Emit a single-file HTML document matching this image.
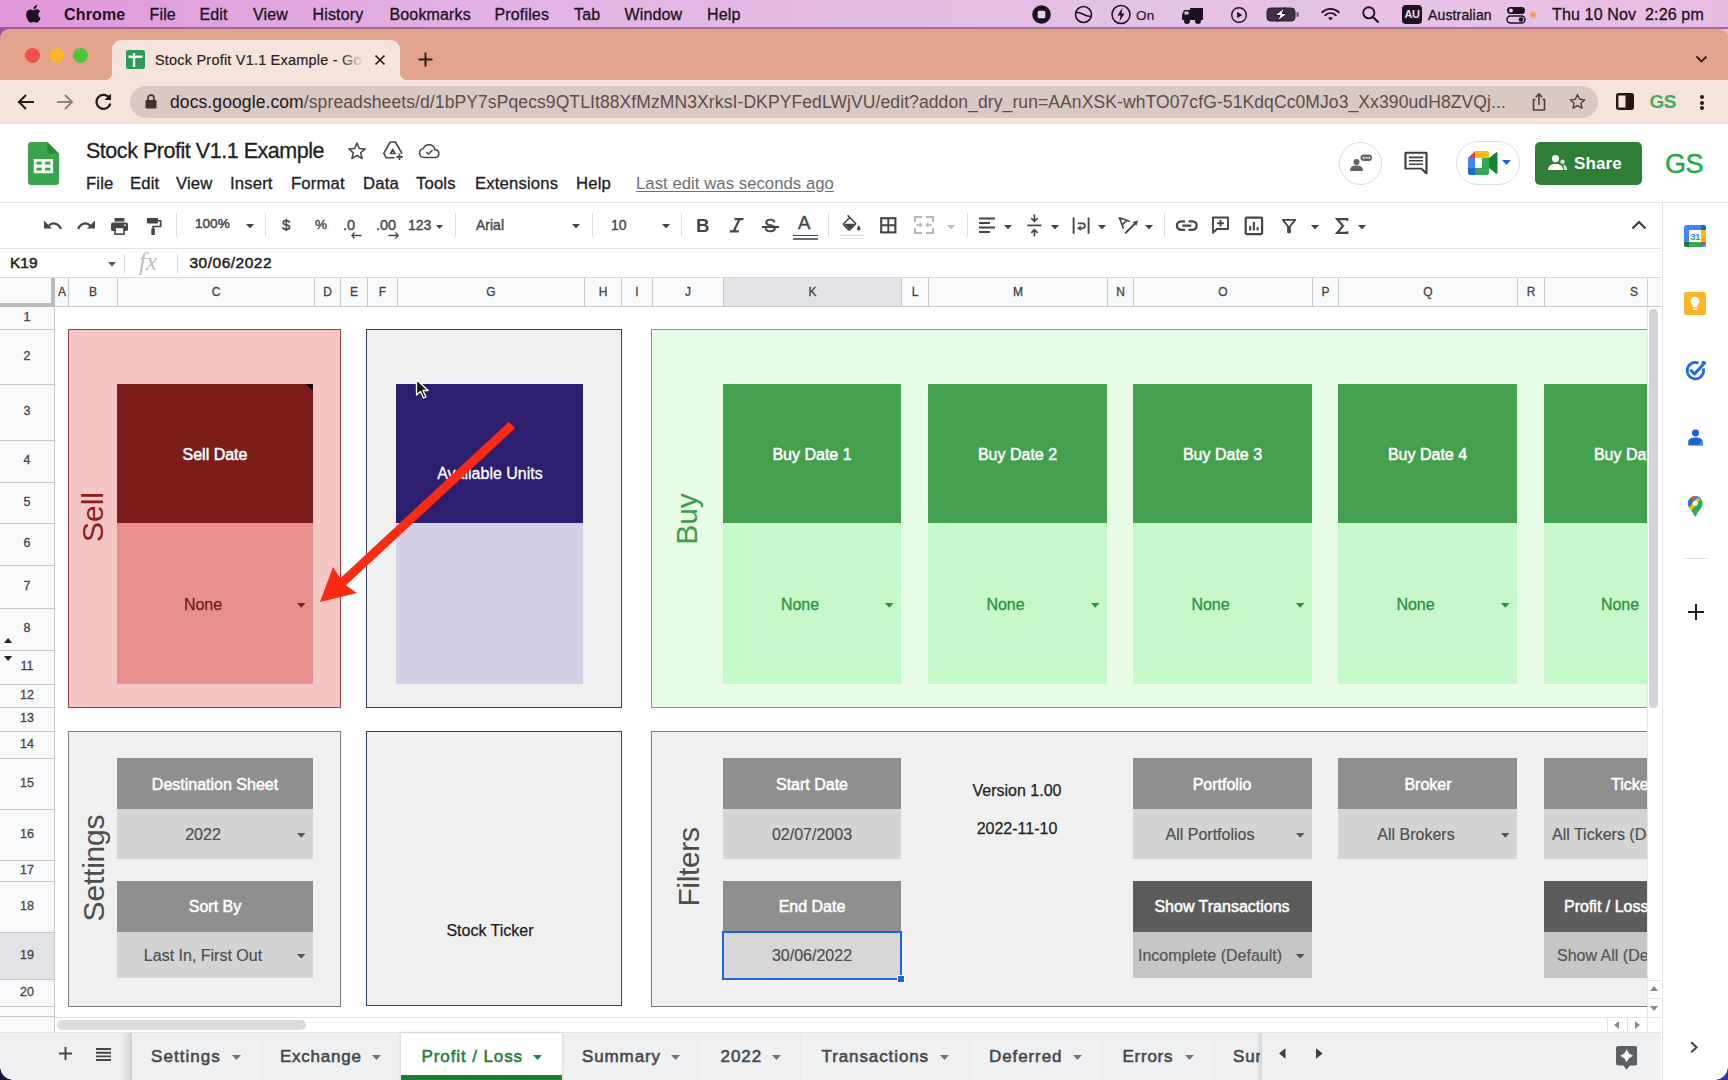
<!DOCTYPE html>
<html lang="en"><head><meta charset="utf-8"><title>Stock Profit V1.1 Example - Google Sheets</title>
<style>
html,body{margin:0;padding:0}
body{width:1728px;height:1080px;overflow:hidden;background:#fff;position:relative;font-family:"Liberation Sans",sans-serif}
#root{position:absolute;left:0;top:0;width:1728px;height:1080px;overflow:hidden;background:#fff}

#macbar{position:absolute;left:0;top:0;width:1728px;height:29px;background:linear-gradient(90deg,#e096da 0%,#e1a0dd 9%,#e2afe2 24%,#e4bae5 45%,#e4c1e6 65%,#e8c2e7 85%,#e9bbe3 100%)}
.mm{position:absolute;top:4.5px;font:16px/20px "Liberation Sans",sans-serif;color:#1d1220;white-space:nowrap;-webkit-text-stroke:.3px #1d1220;letter-spacing:.15px}
.mb{font-weight:bold;-webkit-text-stroke:0}
#tabstrip{position:absolute;left:0;top:29px;width:1728px;height:51px;background:#e3a28d;border-radius:9px 9px 0 0}
#acttab{position:absolute;left:112px;top:40px;width:288px;height:41px;background:#f6e3dc;border-radius:9px 9px 0 0}
#tabtitle{position:absolute;left:155px;top:50px;width:208px;overflow:hidden;white-space:nowrap;letter-spacing:.2px;-webkit-text-stroke:.2px #2a1f1d;font:14.5px/20px "Liberation Sans",sans-serif;color:#2a1f1d}
#ctool{position:absolute;left:0;top:80px;width:1728px;height:43px;background:#f6e3dc;border-bottom:1px solid #eedbd4}
#omni{position:absolute;left:130px;top:86px;width:1468px;height:32px;border-radius:16px;background:#d9c8c3}
#url{position:absolute;left:170px;top:91px;font:17.5px/22px "Liberation Sans",sans-serif;color:#5a4e4b;white-space:nowrap;letter-spacing:.1px}

#shdr{position:absolute;left:0;top:125px;width:1728px;height:77px;background:#fff;border-bottom:1px solid #e3e3e3}
#doctitle{position:absolute;left:86px;top:137px;font:21.5px/28px "Liberation Sans",sans-serif;color:#1f1f1f;white-space:nowrap;letter-spacing:-.47px;-webkit-text-stroke:.3px #1f1f1f}
.sm{position:absolute;top:172.5px;letter-spacing:.15px;font:16.7px/22px "Liberation Sans",sans-serif;color:#202124;white-space:nowrap;-webkit-text-stroke:.3px #202124}
#sharebtn{position:absolute;left:1535px;top:142px;width:107px;height:43px;border-radius:5px;background:#2f7d37}
#stool{position:absolute;left:0;top:203px;width:1661px;height:45px;background:#fff;border-bottom:1px solid #e1e1e1}
.tsep{position:absolute;top:213px;width:1px;height:24px;background:#dcdcdc}
.tt{position:absolute;top:214px;font:14px/22px "Liberation Sans",sans-serif;color:#444746;white-space:nowrap;-webkit-text-stroke:.4px #444746}
#fbar{position:absolute;left:0;top:249px;width:1661px;height:28px;background:#fff;border-bottom:1px solid #d9d9d9}

.ch{position:absolute;top:278px;height:29px;box-sizing:border-box;border-right:1px solid #c4c7c5;border-bottom:1px solid #c4c7c5;text-align:center;font:12px/29px "Liberation Sans",sans-serif;color:#444;-webkit-text-stroke:.3px #444}
.rh{position:absolute;left:0;width:55px;box-sizing:border-box;border-right:1px solid #c4c7c5;border-bottom:1px solid #c4c7c5;text-align:center;font:12.5px "Liberation Sans",sans-serif;color:#444;-webkit-text-stroke:.3px #444}

#tabbar{position:absolute;left:0;top:1032px;width:1661px;height:48px;background:#eff0f1;border-top:1px solid #e4e4e4;box-sizing:border-box}
.st{position:absolute;top:1046px;font:17px/22px "Liberation Sans",sans-serif;white-space:nowrap;letter-spacing:.35px}
#side{position:absolute;left:1662px;top:203px;width:66px;height:877px;background:#fff;border-left:1px solid #e0e0e0;box-sizing:border-box}

</style></head>
<body><div id="root">
<div id="macbar"></div>
<div style="position:absolute;left:0;top:27.3px;width:1728px;height:1.7px;background:rgba(95,25,75,.5)"></div>
<svg style="position:absolute;left:22.5px;top:2.5px" width="18.7" height="22" viewBox="0 0 17 20"><path fill="#1d1220" d="M13.9 10.6c0-2.1 1.7-3.1 1.8-3.2-1-1.4-2.5-1.6-3-1.7-1.3-.1-2.5.8-3.1.8-.7 0-1.6-.7-2.7-.7-1.4 0-2.6.8-3.3 2-1.4 2.5-.4 6.1 1 8.1.7 1 1.5 2.1 2.5 2 1-.04 1.4-.65 2.6-.65s1.6.65 2.7.63c1.1-.02 1.8-1 2.5-2 .8-1.1 1.1-2.2 1.1-2.3-.02-.01-2.1-.8-2.1-3.2zM11.9 4.3c.6-.7 1-1.7.9-2.6-.8.03-1.8.55-2.4 1.25-.5.6-1 1.6-.85 2.5.9.07 1.8-.45 2.35-1.15z"/></svg>
<div class="mm mb" style="left:64px">Chrome</div>
<div class="mm" style="left:149.5px">File</div>
<div class="mm" style="left:199.5px">Edit</div>
<div class="mm" style="left:253px">View</div>
<div class="mm" style="left:312.5px">History</div>
<div class="mm" style="left:389.5px">Bookmarks</div>
<div class="mm" style="left:494.5px">Profiles</div>
<div class="mm" style="left:574px">Tab</div>
<div class="mm" style="left:624.5px">Window</div>
<div class="mm" style="left:707px">Help</div>
<svg style="position:absolute;left:1031px;top:4px" width="21" height="21" viewBox="0 0 21 21"><circle cx="10.5" cy="10.5" r="9.3" fill="#1d1220"/><rect x="6.7" y="6.7" width="7.6" height="7.6" rx="1.5" fill="#e9d3ea"/></svg>
<svg style="position:absolute;left:1073px;top:4px" width="21" height="21" viewBox="0 0 21 21"><circle cx="10.5" cy="10.5" r="8" fill="none" stroke="#1d1220" stroke-width="1.6"/><path d="M3 9 C8 6,12 14,18 12" fill="none" stroke="#1d1220" stroke-width="1.6"/></svg>
<svg style="position:absolute;left:1110px;top:3px" width="22" height="23" viewBox="0 0 22 23"><circle cx="11" cy="11.5" r="9" fill="none" stroke="#1d1220" stroke-width="1.5"/><path d="M12.5 4.5 L7.5 12.5 H10.5 L9.5 18.5 L14.5 10.5 H11.5 Z" fill="#1d1220"/></svg>
<div class="mm" style="left:1136px;font-size:13.5px;top:6px;-webkit-text-stroke:.15px #1d1220">On</div>
<svg style="position:absolute;left:1181px;top:6px" width="24" height="19" viewBox="0 0 24 19"><path d="M1 9 L3 4 H9 V2 H22 V14 H1 Z" fill="#1d1220"/><circle cx="6" cy="15" r="3" fill="#1d1220"/><circle cx="17" cy="15" r="3" fill="#1d1220"/><rect x="3.5" y="5.5" width="4" height="3" fill="#e3bfe4"/></svg>
<svg style="position:absolute;left:1230px;top:6px" width="18" height="18" viewBox="0 0 18 18"><circle cx="9" cy="9" r="7.3" fill="none" stroke="#1d1220" stroke-width="1.4"/><path d="M7.2 5.8 L12.2 9 L7.2 12.2 Z" fill="#1d1220"/></svg>
<svg style="position:absolute;left:1266px;top:6px" width="34" height="17" viewBox="0 0 34 17"><rect x="1" y="2" width="28" height="13" rx="3.5" fill="#3f3044" stroke="#2c2030" stroke-width="1"/><rect x="30.5" y="6" width="2.2" height="5" rx="1" fill="#6b5a6e"/><path d="M19 1.5 L8.5 9.5 H14 L11 15.5 L21.5 7.5 H16 Z" fill="#fff" stroke="#1d1220" stroke-width="1"/></svg>
<svg style="position:absolute;left:1321px;top:7px" width="19" height="14.5" viewBox="0 0 24 18"><path d="M1.5 6.5 C7.5 .8,16.5 .8,22.5 6.5" fill="none" stroke="#1d1220" stroke-width="2.3" stroke-linecap="round"/><path d="M5.3 10.2 C9.3 6.6,14.7 6.6,18.7 10.2" fill="none" stroke="#1d1220" stroke-width="2.3" stroke-linecap="round"/><path d="M9 13.7 C10.8 12.2,13.2 12.2,15 13.7 L12 17 Z" fill="#1d1220"/></svg>
<svg style="position:absolute;left:1361px;top:5px" width="19" height="19" viewBox="0 0 19 19"><circle cx="7.8" cy="7.8" r="5.6" fill="none" stroke="#1d1220" stroke-width="1.9"/><path d="M12 12 L17 17" stroke="#1d1220" stroke-width="2.1" stroke-linecap="round"/></svg>
<div style="position:absolute;left:1402px;top:5px;width:20px;height:19px;background:#1d1220;border-radius:4px;color:#f0d8f0;font:bold 11px/19px 'Liberation Sans',sans-serif;text-align:center;letter-spacing:-.5px">AU</div>
<div class="mm" style="left:1428px;font-size:14px;top:5px">Australian</div>
<svg style="position:absolute;left:1506px;top:6px" width="22" height="18" viewBox="0 0 22 18"><rect x="1" y="1" width="18" height="7" rx="3.5" fill="#1d1220"/><circle cx="5" cy="4.5" r="2" fill="#e6c9e8"/><rect x="1" y="10" width="18" height="7" rx="3.5" fill="none" stroke="#1d1220" stroke-width="1.5"/><circle cx="15" cy="13.5" r="2.3" fill="#1d1220"/></svg>
<div style="position:absolute;left:1530px;top:12px;width:6px;height:6px;border-radius:3px;background:#f0a050"></div>
<div class="mm" style="left:1552px">Thu 10 Nov</div>
<div class="mm" style="left:1645px">2:26 pm</div>
<div style="position:absolute;left:0;top:29px;width:1728px;height:12px;background:linear-gradient(90deg,#a04fa0,#c9a3d0 8%,#d9bfe0)"></div>
<div id="tabstrip"></div>
<div style="position:absolute;left:24.799999999999997px;top:47.8px;width:15px;height:15px;border-radius:7.5px;background:#f0514e"></div>
<div style="position:absolute;left:48.7px;top:47.8px;width:15px;height:15px;border-radius:7.5px;background:#f8b92f"></div>
<div style="position:absolute;left:72.7px;top:47.8px;width:15px;height:15px;border-radius:7.5px;background:#4fc53b"></div>
<div id="acttab"></div>
<div style="position:absolute;left:104px;top:72px;width:8px;height:8px;background:radial-gradient(circle at 0 0,transparent 8px,#f6e3dc 8.5px)"></div>
<div style="position:absolute;left:400px;top:72px;width:8px;height:8px;background:radial-gradient(circle at 100% 0,transparent 8px,#f6e3dc 8.5px)"></div>
<svg style="position:absolute;left:126px;top:50px" width="19" height="19" viewBox="0 0 19 19"><rect width="19" height="19" rx="2" fill="#2c9c56"/><rect x="6.9" y="3" width="2.3" height="14" fill="#fff"/><rect x="2.5" y="5.6" width="14" height="2.3" fill="#fff"/></svg>
<div id="tabtitle">Stock Profit V1.1 Example - Go</div>
<div style="position:absolute;left:340px;top:44px;width:26px;height:30px;background:linear-gradient(90deg,rgba(246,227,220,0),#f6e3dc 90%)"></div>
<svg style="position:absolute;left:374px;top:54px" width="12" height="12" viewBox="0 0 12 12"><path d="M1.5 1.5 L10.5 10.5 M10.5 1.5 L1.5 10.5" stroke="#2a1f1d" stroke-width="1.7"/></svg>
<svg style="position:absolute;left:418px;top:52px" width="15" height="15" viewBox="0 0 15 15"><path d="M7.5 .5 V14.5 M.5 7.5 H14.5" stroke="#2a1f1d" stroke-width="2"/></svg>
<svg style="position:absolute;left:1695px;top:55px" width="13" height="9" viewBox="0 0 13 9"><path d="M1.5 1.5 L6.5 6.5 L11.5 1.5" fill="none" stroke="#2a1f1d" stroke-width="1.9"/></svg>
<div id="ctool"></div>
<svg style="position:absolute;left:17px;top:93px" width="18" height="18" viewBox="0 0 18 18"><path d="M17 9 H2.5 M9 2 L2 9 L9 16" fill="none" stroke="#231a18" stroke-width="2.1"/></svg>
<svg style="position:absolute;left:56px;top:93px" width="18" height="18" viewBox="0 0 18 18"><path d="M1 9 H15.5 M9 2 L16 9 L9 16" fill="none" stroke="#8f817e" stroke-width="2"/></svg>
<svg style="position:absolute;left:94px;top:92px" width="19" height="19" viewBox="0 0 19 19"><path d="M15.5 6.2 A7 7 0 1 0 16.3 11.5" fill="none" stroke="#231a18" stroke-width="2.2"/><path d="M17 1.5 V8 H10.5 Z" fill="#231a18"/></svg>
<div id="omni"></div>
<svg style="position:absolute;left:145px;top:94px" width="12" height="15" viewBox="0 0 12 15"><rect x=".5" y="6" width="11" height="8.5" rx="1.2" fill="#3e3432"/><path d="M3 6.5 V4.2 a3 3 0 0 1 6 0 V6.5" fill="none" stroke="#3e3432" stroke-width="1.7"/></svg>
<div id="url"><span style="color:#1f1816">docs.google.com</span>/spreadsheets/d/1bPY7sPqecs9QTLIt88XfMzMN3XrksI-DKPYFedLWjVU/edit?addon_dry_run=AAnXSK-whTO07cfG-51KdqCc0MJo3_Xx390udH8ZVQj...</div>
<svg style="position:absolute;left:1531px;top:92px" width="16" height="20" viewBox="0 0 16 20"><path d="M4.5 7.5 H2.5 V18 H13.5 V7.5 H11.5" fill="none" stroke="#4a403d" stroke-width="1.6"/><path d="M8 13 V2.5 M4.8 5.2 L8 2 L11.2 5.2" fill="none" stroke="#4a403d" stroke-width="1.6"/></svg>
<svg style="position:absolute;left:1568.5px;top:93px" width="17" height="16.2" viewBox="0 0 20 19"><path d="M10 1.8 L12.5 7.3 L18.5 8 L14 12 L15.3 17.8 L10 14.8 L4.7 17.8 L6 12 L1.5 8 L7.5 7.3 Z" fill="none" stroke="#4a403d" stroke-width="1.6" stroke-linejoin="round"/></svg>
<svg style="position:absolute;left:1616px;top:93px" width="18" height="17" viewBox="0 0 18 17"><rect x="1.2" y="1.2" width="15.6" height="14.6" rx="1.5" fill="none" stroke="#1f1816" stroke-width="2.4"/><rect x="9.5" y="1.2" width="7.3" height="14.6" fill="#1f1816"/></svg>
<div style="position:absolute;left:1649.5px;top:89.5px;font:bold 19px/24px 'Liberation Sans',sans-serif;color:#43ad5e;letter-spacing:-.6px">GS</div>
<div style="position:absolute;left:1700px;top:95px;width:4px;height:4px;border-radius:2px;background:#231a18"></div>
<div style="position:absolute;left:1700px;top:100.7px;width:4px;height:4px;border-radius:2px;background:#231a18"></div>
<div style="position:absolute;left:1700px;top:106.4px;width:4px;height:4px;border-radius:2px;background:#231a18"></div>
<div id="shdr"></div>
<svg style="position:absolute;left:27.7px;top:141.5px" width="31" height="43" viewBox="0 0 32 44" preserveAspectRatio="none">
<path d="M3 0 H20 L32 12 V41 a3 3 0 0 1 -3 3 H3 a3 3 0 0 1 -3 -3 V3 a3 3 0 0 1 3 -3 Z" fill="#3aa34e"/>
<path d="M20 0 L32 12 H23 a3 3 0 0 1 -3 -3 Z" fill="#2a8a35"/>
<path d="M5.9 17.4 H25.9 V31.9 H5.9 Z M8.8 20.2 V23.1 H14.1 V20.2 Z M17.7 20.2 V23.1 H23.1 V20.2 Z M8.8 26.3 V29.2 H14.1 V26.3 Z M17.7 26.3 V29.2 H23.1 V26.3 Z" fill="#f1f8f2" fill-rule="evenodd"/>
</svg>
<div id="doctitle">Stock Profit V1.1 Example</div>
<svg style="position:absolute;left:347px;top:141px" width="20" height="19" viewBox="0 0 20 19"><path d="M10 2 L12.3 7.4 L18.2 7.9 L13.7 11.8 L15.1 17.5 L10 14.4 L4.9 17.5 L6.3 11.8 L1.8 7.9 L7.7 7.4 Z" fill="none" stroke="#444746" stroke-width="1.5" stroke-linejoin="round"/></svg>
<svg style="position:absolute;left:382px;top:140px" width="23" height="21" viewBox="0 0 23 21"><path d="M8.2 2 H13.3 L20 13.5 M8.2 2 L1.8 13.3 L4.3 17.8 H12.5 M8.5 13.5 L10.8 9.5 L13 13.5 Z" fill="none" stroke="#444746" stroke-width="1.6" stroke-linejoin="round"/><path d="M17.5 13.5 V20 M14.3 16.8 H20.8" stroke="#444746" stroke-width="1.7"/></svg>
<svg style="position:absolute;left:418px;top:143px" width="23" height="16" viewBox="0 0 23 16"><path d="M6 14.5 a4.5 4.5 0 0 1 -.6 -8.95 a6 6 0 0 1 11.5 1.2 a3.9 3.9 0 0 1 .6 7.75 Z" fill="none" stroke="#444746" stroke-width="1.6"/><path d="M8.2 9 L10.5 11.2 L14.5 7" fill="none" stroke="#444746" stroke-width="1.5"/></svg>
<div class="sm" style="left:86px">File</div>
<div class="sm" style="left:130px">Edit</div>
<div class="sm" style="left:176px">View</div>
<div class="sm" style="left:230px">Insert</div>
<div class="sm" style="left:291px">Format</div>
<div class="sm" style="left:363px">Data</div>
<div class="sm" style="left:416px">Tools</div>
<div class="sm" style="left:475px">Extensions</div>
<div class="sm" style="left:576px">Help</div>
<div class="sm" style="left:636px;color:#6b6f73;text-decoration:underline;text-underline-offset:2px;-webkit-text-stroke:0;letter-spacing:.05px">Last edit was seconds ago</div>
<div style="position:absolute;left:1339px;top:141.5px;width:43px;height:43px;border-radius:21.5px;border:1.8px solid #d6d8db;box-sizing:border-box"></div>
<svg style="position:absolute;left:1349px;top:153px" width="24" height="20" viewBox="0 0 24 20"><circle cx="7.5" cy="9" r="3" fill="#5f6368"/><path d="M1 18 c0 -4.5 3 -5.5 6.5 -5.5 s6.5 1 6.5 5.5 Z" fill="#5f6368"/><rect x="11.5" y="1.5" width="11.5" height="6.5" rx="3.2" fill="#5f6368"/><circle cx="14.7" cy="4.75" r="1" fill="#fff"/><circle cx="17.5" cy="4.75" r="1" fill="#fff"/><circle cx="20.3" cy="4.75" r="1" fill="#fff"/></svg>
<svg style="position:absolute;left:1403px;top:150.5px" width="26" height="23.5" viewBox="0 0 26 26" preserveAspectRatio="none"><path d="M2.5 2 H23.5 V25 L18.5 19.5 H2.5 Z" fill="none" stroke="#3c4043" stroke-width="2.2" stroke-linejoin="round"/><path d="M6 7 H20 M6 10.8 H20 M6 14.6 H20" stroke="#3c4043" stroke-width="1.8"/></svg>
<div style="position:absolute;left:1456px;top:141px;width:64px;height:44px;border-radius:22px;border:1.5px solid #dadce0;box-sizing:border-box"></div>
<svg style="position:absolute;left:1468px;top:151px" width="30" height="24" viewBox="0 0 30 24">
<path d="M0 7 L7 0 V7 Z" fill="#ea4335"/><path d="M7 0 H19 a2 2 0 0 1 2 2 V7 H7 Z" fill="#fbbc04"/>
<path d="M0 7 H7 V17 H0 Z" fill="#4285f4"/><path d="M0 17 H7 V24 H2 a2 2 0 0 1 -2 -2 Z" fill="#1967d2"/>
<path d="M7 17 H21 V22 a2 2 0 0 1 -2 2 H7 Z" fill="#34a853"/>
<path d="M21 7 L28 1.5 a1 1 0 0 1 1.5 .8 V21.7 a1 1 0 0 1 -1.5 .8 L21 17 Z" fill="#188038"/><path d="M14 7 H21 V17 H14 Z" fill="#34a853"/><path d="M7 7 H14 V17 H7 Z" fill="#fff"/>
</svg>
<svg style="position:absolute;left:1501.5px;top:160.0px" width="9" height="5" viewBox="0 0 8 4.5"><path d="M0 0 H8 L4 4.5 Z" fill="#1a67d2"/></svg>
<div id="sharebtn"></div>
<svg style="position:absolute;left:1548px;top:154px" width="19" height="17" viewBox="0 0 19 17"><circle cx="7.5" cy="4.6" r="3.6" fill="#fff"/><path d="M0 16 c0 -4.5 3.5 -6 7.5 -6 s7.5 1.5 7.5 6 Z" fill="#fff"/><path d="M14.5 5.5 a2.3 2.3 0 1 0 .01 0 M15.5 10.5 c2 .5 3.5 2 3.5 5.5 h-3" fill="#cfe7d3"/></svg>
<div style="position:absolute;left:1574px;top:153px;font:bold 17px/22px 'Liberation Sans',sans-serif;color:#fff;letter-spacing:.1px">Share</div>
<div style="position:absolute;left:1665px;top:145px;font:27px/38px 'Liberation Sans',sans-serif;color:#1ea845;letter-spacing:-.6px;-webkit-text-stroke:.35px #1ea845">GS</div>
<div id="stool"></div>
<svg style="position:absolute;left:43px;top:217px" width="20" height="14" viewBox="0 0 20 14"><path d="M5.5 9 C9 5,15 5.5,18 12" fill="none" stroke="#444746" stroke-width="2.2"/><path d="M1 3.5 V11.5 H9 Z" fill="#444746"/></svg>
<svg style="position:absolute;left:76px;top:217px" width="20" height="14" viewBox="0 0 20 14"><path d="M14.5 9 C11 5,5 5.5,2 12" fill="none" stroke="#444746" stroke-width="2.2"/><path d="M19 3.5 V11.5 H11 Z" fill="#444746"/></svg>
<svg style="position:absolute;left:110px;top:217.5px" width="19" height="17" viewBox="0 0 21 19"><rect x="5" y="0" width="11" height="4" fill="#444746"/><rect x="1" y="5" width="19" height="9.5" rx="2" fill="#444746"/><rect x="5.5" y="10.5" width="10" height="7.5" fill="#fff" stroke="#444746" stroke-width="1.8"/><circle cx="16.7" cy="8" r="1" fill="#fff"/></svg>
<svg style="position:absolute;left:146px;top:217.5px" width="16" height="17" viewBox="0 0 18 19"><rect x="1" y="0" width="12.5" height="6" rx="1" fill="#444746"/><path d="M13.5 3 H16.5 V9.5 H8 V12" fill="none" stroke="#444746" stroke-width="1.9"/><rect x="6" y="11.5" width="4" height="7.5" rx=".8" fill="#444746"/></svg>
<div class="tsep" style="left:176px"></div>
<div class="tsep" style="left:265px"></div>
<div class="tsep" style="left:455px"></div>
<div class="tsep" style="left:592px"></div>
<div class="tsep" style="left:681px"></div>
<div class="tsep" style="left:828px"></div>
<div class="tsep" style="left:967px"></div>
<div class="tsep" style="left:1164px"></div>
<div class="tt" style="left:195px;top:213px;font-size:13.6px;-webkit-text-stroke:.45px #444746">100%</div>
<svg style="position:absolute;left:246.0px;top:223.75px" width="8" height="4.5" viewBox="0 0 8 4.5"><path d="M0 0 H8 L4 4.5 Z" fill="#444"/></svg>
<div class="tt" style="left:282px;font-size:15px">$</div>
<div class="tt" style="left:315px;font-size:13.5px">%</div>
<div class="tt" style="left:343px;font-size:14.5px">.0</div>
<svg style="position:absolute;left:351px;top:232px" width="11" height="7" viewBox="0 0 11 7"><path d="M3.5 .5 L.8 3.5 L3.5 6.5 M1 3.5 H10.5" fill="none" stroke="#444746" stroke-width="1.3"/></svg>
<div class="tt" style="left:376px;font-size:14.5px">.00</div>
<svg style="position:absolute;left:388px;top:232px" width="11" height="7" viewBox="0 0 11 7"><path d="M7.5 .5 L10.2 3.5 L7.5 6.5 M10 3.5 H.5" fill="none" stroke="#444746" stroke-width="1.3"/></svg>
<div class="tt" style="left:408px">123</div>
<svg style="position:absolute;left:436.0px;top:224.5px" width="7" height="4" viewBox="0 0 8 4.5"><path d="M0 0 H8 L4 4.5 Z" fill="#444"/></svg>
<div class="tt" style="left:476px">Arial</div>
<svg style="position:absolute;left:571.5px;top:223.75px" width="8" height="4.5" viewBox="0 0 8 4.5"><path d="M0 0 H8 L4 4.5 Z" fill="#444"/></svg>
<div class="tt" style="left:611px">10</div>
<svg style="position:absolute;left:661.5px;top:223.75px" width="8" height="4.5" viewBox="0 0 8 4.5"><path d="M0 0 H8 L4 4.5 Z" fill="#444"/></svg>
<div style="position:absolute;left:696px;top:213.5px;font:bold 18.7px/24px 'Liberation Sans',sans-serif;color:#444746">B</div>
<svg style="position:absolute;left:729px;top:218px" width="16" height="15" viewBox="0 0 16 15"><path d="M5.5 1.2 H14.5 M.8 13.3 H9.8 M10.6 1.2 L4.6 13.3" fill="none" stroke="#444746" stroke-width="2.2"/></svg>
<div style="position:absolute;left:764px;top:213.5px;font:18.5px/24px 'Liberation Sans',sans-serif;color:#444746;-webkit-text-stroke:.5px #444746">S</div>
<div style="position:absolute;left:762px;top:225.9px;width:17px;height:1.8px;background:#444746"></div>
<div style="position:absolute;left:798px;top:211px;font:18.6px/24px 'Liberation Sans',sans-serif;color:#444746;-webkit-text-stroke:.45px #444746">A</div>
<div style="position:absolute;left:793px;top:235.2px;width:25px;height:1.3px;background:#444746"></div>
<div style="position:absolute;left:793px;top:238.3px;width:25px;height:1.3px;background:#6b6e70"></div>
<svg style="position:absolute;left:840px;top:214px" width="25" height="26" viewBox="0 0 25 26"><path d="M7.6 1.3 L9.9 3.6 M9.8 3.5 L3.8 9.5 a1 1 0 0 0 0 1.4 L8.5 15.6 a1 1 0 0 0 1.4 0 L15.5 10 a.6.6 0 0 0 0 -.8 Z" fill="none" stroke="#444746" stroke-width="1.6" stroke-linejoin="round"/><path d="M4.3 9.8 H15 L9.2 15.5 Z" fill="#444746"/><path d="M18.8 11.5 c0 0 -1.8 2.2 -1.8 3.3 a1.8 1.8 0 0 0 3.6 0 c0 -1.1 -1.8 -3.3 -1.8 -3.3 Z" fill="#444746"/><rect x=".3" y="20.7" width="23.6" height="1.2" fill="#d6d6d6"/><rect x=".3" y="23.9" width="23.6" height="1.1" fill="#e2e2e2"/></svg>
<svg style="position:absolute;left:879.5px;top:217px" width="17" height="17" viewBox="0 0 17 17"><rect x="1.2" y="1.2" width="14.2" height="14.2" fill="none" stroke="#444746" stroke-width="2.1"/><path d="M8.3 1 V16 M1 8.3 H16" stroke="#444746" stroke-width="1.9"/></svg>
<svg style="position:absolute;left:914px;top:216px" width="20" height="18" viewBox="0 0 20 18"><path d="M1 6 V1 H8 M12 1 H19 V6 M1 12 V17 H8 M12 17 H19 V12" fill="none" stroke="#b4b7ba" stroke-width="2"/><path d="M2 9 H7.5 M12.5 9 H18 M5.5 7 L7.5 9 L5.5 11 M14.5 7 L12.5 9 L14.5 11" fill="none" stroke="#b4b7ba" stroke-width="1.5"/></svg>
<svg style="position:absolute;left:946.5px;top:224.75px" width="8" height="4.5" viewBox="0 0 8 4.5"><path d="M0 0 H8 L4 4.5 Z" fill="#b9bcbf"/></svg>
<svg style="position:absolute;left:978px;top:217px" width="18" height="17" viewBox="0 0 18 17"><path d="M1 1.5 H17 M1 6 H12 M1 10.5 H17 M1 15 H12" stroke="#444746" stroke-width="2"/></svg>
<svg style="position:absolute;left:1004.0px;top:224.75px" width="8" height="4.5" viewBox="0 0 8 4.5"><path d="M0 0 H8 L4 4.5 Z" fill="#444"/></svg>
<svg style="position:absolute;left:1020px;top:208px" width="140" height="35" viewBox="1020 208 140 35" fill="none" stroke="#444746"><path d="M1027.3 225.4 H1041.5" stroke-width="1.8"/><path d="M1034.4 214.6 V221 M1031.2 218.2 L1034.4 221.4 L1037.6 218.2" stroke-width="1.7"/><path d="M1034.4 236.6 V230 M1031.2 232.8 L1034.4 229.6 L1037.6 232.8" stroke-width="1.7"/><path d="M1073.6 217.6 V233.8 M1088.6 217.6 V233.8" stroke-width="1.9"/><path d="M1078 223.4 H1082.5 a2.45 2.45 0 0 1 0 4.9 H1080" stroke-width="1.7"/><path d="M1077 228.3 L1080.8 225.5 V231.1 Z" fill="#444746" stroke="none"/><path d="M1123.3 228 L1119.4 217.8 L1129.2 221.2 M1122.3 225 L1126.6 220.4" stroke-width="1.7" stroke-linejoin="round" stroke-linecap="round"/><path d="M1125.2 233.3 L1135.5 223" stroke-width="1.9"/><path d="M1138 220.5 L1132.7 222 L1136.5 225.8 Z" fill="#444746" stroke="none"/></svg>
<svg style="position:absolute;left:1051.0px;top:224.75px" width="8" height="4.5" viewBox="0 0 8 4.5"><path d="M0 0 H8 L4 4.5 Z" fill="#444"/></svg>
<svg style="position:absolute;left:1097.5px;top:224.75px" width="8" height="4.5" viewBox="0 0 8 4.5"><path d="M0 0 H8 L4 4.5 Z" fill="#444"/></svg>
<svg style="position:absolute;left:1144.5px;top:224.75px" width="8" height="4.5" viewBox="0 0 8 4.5"><path d="M0 0 H8 L4 4.5 Z" fill="#444"/></svg>
<svg style="position:absolute;left:1175px;top:219.5px" width="24" height="12" viewBox="0 0 24 12"><path d="M10 1.3 H6.2 a4.3 4.3 0 0 0 0 8.6 H10 M13.6 1.3 H17.4 a4.3 4.3 0 0 1 0 8.6 H13.6 M7.3 5.6 H16.3" fill="none" stroke="#444746" stroke-width="2.3"/></svg>
<svg style="position:absolute;left:1211px;top:216px" width="19" height="18" viewBox="0 0 19 18"><path d="M2 1.5 H17 V13 H6 L2 16.8 Z" fill="none" stroke="#444746" stroke-width="1.9" stroke-linejoin="round"/><path d="M9.5 3.8 V10.6 M6.1 7.2 H12.9" stroke="#444746" stroke-width="1.9"/></svg>
<svg style="position:absolute;left:1244px;top:215.5px" width="20" height="20" viewBox="0 0 20 20"><rect x="1.7" y="1.7" width="16.4" height="16.4" rx="1" fill="none" stroke="#444746" stroke-width="2.2"/><path d="M6.2 14.5 V10 M9.9 14.5 V6 M13.6 14.5 V11.3" stroke="#444746" stroke-width="2.1"/></svg>
<svg style="position:absolute;left:1281px;top:217.5px" width="16" height="16" viewBox="0 0 16 16"><path d="M1.8 1.9 H14.2 L8.9 8.5 V14.3 H7.1 V8.5 Z" fill="none" stroke="#444746" stroke-width="1.9" stroke-linejoin="round"/></svg>
<svg style="position:absolute;left:1310.5px;top:224.75px" width="8" height="4.5" viewBox="0 0 8 4.5"><path d="M0 0 H8 L4 4.5 Z" fill="#444"/></svg>
<svg style="position:absolute;left:1334.5px;top:216.5px" width="14" height="18" viewBox="0 0 14 18"><path d="M12.3 3.8 V2.1 H2.2 L8 9 L2.2 15.9 H12.3 V14.2" fill="none" stroke="#444746" stroke-width="2.2" stroke-linejoin="miter"/></svg>
<svg style="position:absolute;left:1358.0px;top:224.75px" width="8" height="4.5" viewBox="0 0 8 4.5"><path d="M0 0 H8 L4 4.5 Z" fill="#444"/></svg>
<svg style="position:absolute;left:1631px;top:220px" width="16" height="10" viewBox="0 0 16 10"><path d="M1.5 8.5 L8 2 L14.5 8.5" fill="none" stroke="#3c4043" stroke-width="2.2"/></svg>
<div id="fbar"></div>
<div class="tt" style="left:10px;top:252px;font-size:15.5px;color:#222;-webkit-text-stroke:.5px #222">K19</div>
<svg style="position:absolute;left:107.5px;top:262.25px" width="8" height="4.5" viewBox="0 0 8 4.5"><path d="M0 0 H8 L4 4.5 Z" fill="#555"/></svg>
<div style="position:absolute;left:124px;top:254px;width:1px;height:19px;background:#d6d6d6"></div>
<div style="position:absolute;left:139px;top:250px;font:italic 25px/24px 'Liberation Serif',serif;color:#bdbdbd">fx</div>
<div style="position:absolute;left:177px;top:254px;width:1px;height:19px;background:#d6d6d6"></div>
<div class="tt" style="left:189.5px;top:252px;font-size:15.5px;letter-spacing:.5px;color:#222;-webkit-text-stroke:.5px #222">30/06/2022</div>
<div id="grid" style="position:absolute;left:0;top:278px;width:1661px;height:754px;overflow:hidden;background:#fff">
<div style="position:absolute;left:0;top:-278px;width:1728px;height:1080px">
<div style="position:absolute;left:0px;top:278px;width:1661px;height:29px;background:#f8f9fa;border-bottom:1px solid #c4c7c5;box-sizing:border-box"></div>
<div class="ch" style="left:56px;width:13px;background:#f8f9fa">A</div>
<div class="ch" style="left:69px;width:49px;background:#f8f9fa">B</div>
<div class="ch" style="left:118px;width:197px;background:#f8f9fa">C</div>
<div class="ch" style="left:315px;width:26px;background:#f8f9fa">D</div>
<div class="ch" style="left:341px;width:27px;background:#f8f9fa">E</div>
<div class="ch" style="left:368px;width:30px;background:#f8f9fa">F</div>
<div class="ch" style="left:398px;width:187px;background:#f8f9fa">G</div>
<div class="ch" style="left:585px;width:37px;background:#f8f9fa">H</div>
<div class="ch" style="left:622px;width:31px;background:#f8f9fa">I</div>
<div class="ch" style="left:653px;width:71px;background:#f8f9fa">J</div>
<div class="ch" style="left:724px;width:178px;background:#e1e3e6">K</div>
<div class="ch" style="left:902px;width:27px;background:#f8f9fa">L</div>
<div class="ch" style="left:929px;width:179px;background:#f8f9fa">M</div>
<div class="ch" style="left:1108px;width:26px;background:#f8f9fa">N</div>
<div class="ch" style="left:1134px;width:179px;background:#f8f9fa">O</div>
<div class="ch" style="left:1313px;width:26px;background:#f8f9fa">P</div>
<div class="ch" style="left:1339px;width:179px;background:#f8f9fa">Q</div>
<div class="ch" style="left:1518px;width:27px;background:#f8f9fa">R</div>
<div class="ch" style="left:1545px;width:179px;background:#f8f9fa">S</div>
<div style="position:absolute;left:0px;top:306px;width:55px;height:726px;background:#f8f9fa;border-right:1px solid #c4c7c5;box-sizing:border-box"></div>
<div class="rh" style="top:307px;height:23px;line-height:20.6px;background:#f8f9fa">1</div>
<div class="rh" style="top:330px;height:55px;line-height:52.6px;background:#f8f9fa">2</div>
<div class="rh" style="top:385px;height:56px;line-height:53.6px;background:#f8f9fa">3</div>
<div class="rh" style="top:441px;height:42px;line-height:39.6px;background:#f8f9fa">4</div>
<div class="rh" style="top:483px;height:41px;line-height:38.6px;background:#f8f9fa">5</div>
<div class="rh" style="top:524px;height:42px;line-height:39.6px;background:#f8f9fa">6</div>
<div class="rh" style="top:566px;height:43px;line-height:40.6px;background:#f8f9fa">7</div>
<div class="rh" style="top:609px;height:42px;line-height:39.6px;background:#f8f9fa">8</div>
<div class="rh" style="top:651px;height:34px;line-height:31.6px;background:#f8f9fa">11</div>
<div class="rh" style="top:685px;height:23px;line-height:20.6px;background:#f8f9fa">12</div>
<div class="rh" style="top:708px;height:24px;line-height:21.6px;background:#f8f9fa">13</div>
<div class="rh" style="top:732px;height:27px;line-height:24.6px;background:#f8f9fa">14</div>
<div class="rh" style="top:759px;height:51px;line-height:48.6px;background:#f8f9fa">15</div>
<div class="rh" style="top:810px;height:51px;line-height:48.6px;background:#f8f9fa">16</div>
<div class="rh" style="top:861px;height:21px;line-height:18.6px;background:#f8f9fa">17</div>
<div class="rh" style="top:882px;height:51px;line-height:48.6px;background:#f8f9fa">18</div>
<div class="rh" style="top:933px;height:47px;line-height:44.6px;background:#e1e3e6">19</div>
<div class="rh" style="top:980px;height:27px;line-height:24.6px;background:#f8f9fa">20</div>
<div class="rh" style="top:1007px;height:10px;line-height:7.6px;background:#f8f9fa"></div>
<div style="position:absolute;left:0px;top:278px;width:55px;height:29px;background:#f8f9fa;border-right:4px solid #bcbcbc;border-bottom:4px solid #bcbcbc;box-sizing:border-box"></div>
<svg style="position:absolute;left:4.4px;top:638.3px" width="8.2" height="5" viewBox="0 0 10 6"><path d="M0 6 H10 L5 0 Z" fill="#222"/></svg>
<svg style="position:absolute;left:4.4px;top:656px" width="8.2" height="5" viewBox="0 0 10 6"><path d="M0 0 H10 L5 6 Z" fill="#222"/></svg>
<div style="position:absolute;left:68px;top:329px;width:273px;height:379px;background:#f4c7c5;border:1.5px solid #9a3b38;box-sizing:border-box"></div>
<div style="position:absolute;left:117px;top:384px;width:196px;height:139px;background:#7b1d19;"></div>
<div style="position:absolute;left:117px;top:523px;width:196px;height:161px;background:#e8908e;"></div>
<svg style="position:absolute;left:306px;top:384px" width="7" height="7" viewBox="0 0 7 7"><path d="M0 0 H7 V7 Z" fill="#111"/></svg>
<div style="position:absolute;left:120.0px;top:444px;width:190px;height:22px;text-align:center;font:normal 16px/22px 'Liberation Sans',sans-serif;color:#fff;white-space:nowrap;-webkit-text-stroke:.5px #fff">Sell Date</div>
<div style="position:absolute;left:53.0px;top:594px;width:300px;height:22px;text-align:center;font:normal 16px/22px 'Liberation Sans',sans-serif;color:#6a1a18;white-space:nowrap;-webkit-text-stroke:.25px #6a1a18">None</div>
<svg style="position:absolute;left:296.77px;top:602.8000000000001px" width="8.459999999999999" height="4.8" viewBox="0 0 9 5"><path d="M0 0 H9 L4.5 5 Z" fill="#7b1d19"/></svg>
<div style="position:absolute;left:-7px;top:496.5px;width:200px;height:40px;text-align:center;font:30px/40px 'Liberation Sans',sans-serif;color:#8e1b1b;white-space:nowrap;transform:rotate(-90deg);">Sell</div>
<div style="position:absolute;left:366px;top:329px;width:256px;height:379px;background:#f0f0f0;border:1.5px solid #33405c;box-sizing:border-box"></div>
<div style="position:absolute;left:396px;top:384px;width:187px;height:139px;background:#2e1e6e;"></div>
<div style="position:absolute;left:396px;top:523px;width:187px;height:161px;background:#d5d0e8;"></div>
<div style="position:absolute;left:400.0px;top:463px;width:180px;height:22px;text-align:center;font:normal 16px/22px 'Liberation Sans',sans-serif;color:#fff;white-space:nowrap;-webkit-text-stroke:.3px #fff">Available Units</div>
<div style="position:absolute;left:651px;top:329px;width:1109px;height:379px;background:#e6fce5;border:1.5px solid #5ab264;box-sizing:border-box"></div>
<div style="position:absolute;left:587px;top:498.5px;width:200px;height:40px;text-align:center;font:30px/40px 'Liberation Sans',sans-serif;color:#3c9d48;white-space:nowrap;transform:rotate(-90deg);">Buy</div>
<div style="position:absolute;left:723px;top:384px;width:178px;height:139px;background:#43a04e;"></div>
<div style="position:absolute;left:723px;top:523px;width:178px;height:161px;background:#c5f7c8;"></div>
<div style="position:absolute;left:727.0px;top:444px;width:170px;height:22px;text-align:center;font:normal 16px/22px 'Liberation Sans',sans-serif;color:#fff;white-space:nowrap;-webkit-text-stroke:.5px #fff">Buy Date 1</div>
<div style="position:absolute;left:750.0px;top:594px;width:100px;height:22px;text-align:center;font:normal 16px/22px 'Liberation Sans',sans-serif;color:#2b9040;white-space:nowrap;-webkit-text-stroke:.3px #2b9040">None</div>
<svg style="position:absolute;left:884.77px;top:602.8000000000001px" width="8.459999999999999" height="4.8" viewBox="0 0 9 5"><path d="M0 0 H9 L4.5 5 Z" fill="#2f8f3e"/></svg>
<div style="position:absolute;left:928px;top:384px;width:179px;height:139px;background:#43a04e;"></div>
<div style="position:absolute;left:928px;top:523px;width:179px;height:161px;background:#c5f7c8;"></div>
<div style="position:absolute;left:932.5px;top:444px;width:170px;height:22px;text-align:center;font:normal 16px/22px 'Liberation Sans',sans-serif;color:#fff;white-space:nowrap;-webkit-text-stroke:.5px #fff">Buy Date 2</div>
<div style="position:absolute;left:955.5px;top:594px;width:100px;height:22px;text-align:center;font:normal 16px/22px 'Liberation Sans',sans-serif;color:#2b9040;white-space:nowrap;-webkit-text-stroke:.3px #2b9040">None</div>
<svg style="position:absolute;left:1090.77px;top:602.8000000000001px" width="8.459999999999999" height="4.8" viewBox="0 0 9 5"><path d="M0 0 H9 L4.5 5 Z" fill="#2f8f3e"/></svg>
<div style="position:absolute;left:1133px;top:384px;width:179px;height:139px;background:#43a04e;"></div>
<div style="position:absolute;left:1133px;top:523px;width:179px;height:161px;background:#c5f7c8;"></div>
<div style="position:absolute;left:1137.5px;top:444px;width:170px;height:22px;text-align:center;font:normal 16px/22px 'Liberation Sans',sans-serif;color:#fff;white-space:nowrap;-webkit-text-stroke:.5px #fff">Buy Date 3</div>
<div style="position:absolute;left:1160.5px;top:594px;width:100px;height:22px;text-align:center;font:normal 16px/22px 'Liberation Sans',sans-serif;color:#2b9040;white-space:nowrap;-webkit-text-stroke:.3px #2b9040">None</div>
<svg style="position:absolute;left:1295.77px;top:602.8000000000001px" width="8.459999999999999" height="4.8" viewBox="0 0 9 5"><path d="M0 0 H9 L4.5 5 Z" fill="#2f8f3e"/></svg>
<div style="position:absolute;left:1338px;top:384px;width:179px;height:139px;background:#43a04e;"></div>
<div style="position:absolute;left:1338px;top:523px;width:179px;height:161px;background:#c5f7c8;"></div>
<div style="position:absolute;left:1342.5px;top:444px;width:170px;height:22px;text-align:center;font:normal 16px/22px 'Liberation Sans',sans-serif;color:#fff;white-space:nowrap;-webkit-text-stroke:.5px #fff">Buy Date 4</div>
<div style="position:absolute;left:1365.5px;top:594px;width:100px;height:22px;text-align:center;font:normal 16px/22px 'Liberation Sans',sans-serif;color:#2b9040;white-space:nowrap;-webkit-text-stroke:.3px #2b9040">None</div>
<svg style="position:absolute;left:1500.77px;top:602.8000000000001px" width="8.459999999999999" height="4.8" viewBox="0 0 9 5"><path d="M0 0 H9 L4.5 5 Z" fill="#2f8f3e"/></svg>
<div style="position:absolute;left:1544px;top:384px;width:179px;height:139px;background:#43a04e;"></div>
<div style="position:absolute;left:1544px;top:523px;width:179px;height:161px;background:#c5f7c8;"></div>
<div style="position:absolute;left:1548.5px;top:444px;width:170px;height:22px;text-align:center;font:normal 16px/22px 'Liberation Sans',sans-serif;color:#fff;white-space:nowrap;-webkit-text-stroke:.5px #fff">Buy Date 5</div>
<div style="position:absolute;left:1570.0px;top:594px;width:100px;height:22px;text-align:center;font:normal 16px/22px 'Liberation Sans',sans-serif;color:#2b9040;white-space:nowrap;-webkit-text-stroke:.3px #2b9040">None</div>
<svg style="position:absolute;left:1706.77px;top:602.8000000000001px" width="8.459999999999999" height="4.8" viewBox="0 0 9 5"><path d="M0 0 H9 L4.5 5 Z" fill="#2f8f3e"/></svg>
<div style="position:absolute;left:68px;top:731px;width:273px;height:276px;background:#f0f0f0;border:1.8px solid #7c7c7c;box-sizing:border-box"></div>
<div style="position:absolute;left:-6.5px;top:847.5px;width:200px;height:40px;text-align:center;font:30px/40px 'Liberation Sans',sans-serif;color:#4d4d4d;white-space:nowrap;transform:rotate(-90deg);letter-spacing:-.2px">Settings</div>
<div style="position:absolute;left:117px;top:758px;width:196px;height:51px;background:#8f8f8f;"></div>
<div style="position:absolute;left:117px;top:809px;width:196px;height:50px;background:#d4d4d4;"></div>
<div style="position:absolute;left:120.0px;top:774px;width:190px;height:22px;text-align:center;font:normal 16px/22px 'Liberation Sans',sans-serif;color:#fff;white-space:nowrap;-webkit-text-stroke:.5px #fff">Destination Sheet</div>
<div style="position:absolute;left:53.0px;top:824px;width:300px;height:22px;text-align:center;font:normal 16px/22px 'Liberation Sans',sans-serif;color:#4e4e4e;white-space:nowrap;-webkit-text-stroke:.2px #4e4e4e;">2022</div>
<svg style="position:absolute;left:296.77px;top:832.8000000000001px" width="8.459999999999999" height="4.8" viewBox="0 0 9 5"><path d="M0 0 H9 L4.5 5 Z" fill="#555"/></svg>
<div style="position:absolute;left:117px;top:881px;width:196px;height:51px;background:#8f8f8f;"></div>
<div style="position:absolute;left:117px;top:932px;width:196px;height:46px;background:#d4d4d4;"></div>
<div style="position:absolute;left:120.0px;top:896px;width:190px;height:22px;text-align:center;font:normal 16px/22px 'Liberation Sans',sans-serif;color:#fff;white-space:nowrap;-webkit-text-stroke:.5px #fff">Sort By</div>
<div style="position:absolute;left:53.0px;top:945px;width:300px;height:22px;text-align:center;font:normal 16px/22px 'Liberation Sans',sans-serif;color:#4e4e4e;white-space:nowrap;-webkit-text-stroke:.2px #4e4e4e;">Last In, First Out</div>
<svg style="position:absolute;left:296.77px;top:953.8000000000001px" width="8.459999999999999" height="4.8" viewBox="0 0 9 5"><path d="M0 0 H9 L4.5 5 Z" fill="#555"/></svg>
<div style="position:absolute;left:366px;top:731px;width:256px;height:275px;background:#f0f0f0;border:1.5px solid #33405c;box-sizing:border-box"></div>
<div style="position:absolute;left:400.0px;top:920px;width:180px;height:22px;text-align:center;font:normal 16px/22px 'Liberation Sans',sans-serif;color:#1e1e1e;white-space:nowrap;-webkit-text-stroke:.25px #1e1e1e">Stock Ticker</div>
<div style="position:absolute;left:651px;top:731px;width:1109px;height:276px;background:#f0f0f0;border:1.8px solid #7c7c7c;box-sizing:border-box"></div>
<div style="position:absolute;left:588.5px;top:847px;width:200px;height:40px;text-align:center;font:30px/40px 'Liberation Sans',sans-serif;color:#4d4d4d;white-space:nowrap;transform:rotate(-90deg);letter-spacing:-.35px">Filters</div>
<div style="position:absolute;left:723px;top:758px;width:178px;height:51px;background:#8f8f8f;"></div>
<div style="position:absolute;left:723px;top:809px;width:178px;height:50px;background:#d4d4d4;"></div>
<div style="position:absolute;left:727.0px;top:774px;width:170px;height:22px;text-align:center;font:normal 16px/22px 'Liberation Sans',sans-serif;color:#fff;white-space:nowrap;-webkit-text-stroke:.5px #fff">Start Date</div>
<div style="position:absolute;left:662.0px;top:824px;width:300px;height:22px;text-align:center;font:normal 16px/22px 'Liberation Sans',sans-serif;color:#4e4e4e;white-space:nowrap;-webkit-text-stroke:.2px #4e4e4e;">02/07/2003</div>
<div style="position:absolute;left:723px;top:881px;width:178px;height:51px;background:#8f8f8f;"></div>
<div style="position:absolute;left:723px;top:932px;width:178px;height:47px;background:#d8d6d6;"></div>
<div style="position:absolute;left:727.0px;top:896px;width:170px;height:22px;text-align:center;font:normal 16px/22px 'Liberation Sans',sans-serif;color:#fff;white-space:nowrap;-webkit-text-stroke:.5px #fff">End Date</div>
<div style="position:absolute;left:662.0px;top:945px;width:300px;height:22px;text-align:center;font:normal 16px/22px 'Liberation Sans',sans-serif;color:#4e4e4e;white-space:nowrap;-webkit-text-stroke:.2px #4e4e4e;">30/06/2022</div>
<div style="position:absolute;left:722px;top:931px;width:180px;height:49px;border:2px solid #1a66dd;box-sizing:border-box"></div>
<div style="position:absolute;left:897px;top:975px;width:8px;height:8px;background:#1a66dd;border:1px solid #fff;box-sizing:border-box"></div>
<div style="position:absolute;left:932.0px;top:780px;width:170px;height:22px;text-align:center;font:normal 16px/22px 'Liberation Sans',sans-serif;color:#1e1e1e;white-space:nowrap;-webkit-text-stroke:.25px #1e1e1e">Version 1.00</div>
<div style="position:absolute;left:932.0px;top:818px;width:170px;height:22px;text-align:center;font:normal 16px/22px 'Liberation Sans',sans-serif;color:#1e1e1e;white-space:nowrap;-webkit-text-stroke:.25px #1e1e1e">2022-11-10</div>
<div style="position:absolute;left:1133px;top:758px;width:179px;height:51px;background:#8f8f8f;"></div>
<div style="position:absolute;left:1133px;top:809px;width:179px;height:50px;background:#d4d4d4;"></div>
<div style="position:absolute;left:1137.0px;top:774px;width:170px;height:22px;text-align:center;font:normal 16px/22px 'Liberation Sans',sans-serif;color:#fff;white-space:nowrap;-webkit-text-stroke:.5px #fff">Portfolio</div>
<div style="position:absolute;left:1060.0px;top:824px;width:300px;height:22px;text-align:center;font:normal 16px/22px 'Liberation Sans',sans-serif;color:#4e4e4e;white-space:nowrap;-webkit-text-stroke:.2px #4e4e4e;">All Portfolios</div>
<svg style="position:absolute;left:1295.77px;top:832.8000000000001px" width="8.459999999999999" height="4.8" viewBox="0 0 9 5"><path d="M0 0 H9 L4.5 5 Z" fill="#555"/></svg>
<div style="position:absolute;left:1133px;top:881px;width:179px;height:51px;background:#5c5c5c;"></div>
<div style="position:absolute;left:1133px;top:932px;width:179px;height:46px;background:#c6c6c6;"></div>
<div style="position:absolute;left:1133.0px;top:896px;width:178px;height:22px;text-align:center;font:normal 16px/22px 'Liberation Sans',sans-serif;color:#fff;white-space:nowrap;-webkit-text-stroke:.5px #fff">Show Transactions</div>
<div style="position:absolute;left:1060.0px;top:945px;width:300px;height:22px;text-align:center;font:normal 16px/22px 'Liberation Sans',sans-serif;color:#555;white-space:nowrap;-webkit-text-stroke:.2px #555;">Incomplete (Default)</div>
<svg style="position:absolute;left:1295.77px;top:953.8000000000001px" width="8.459999999999999" height="4.8" viewBox="0 0 9 5"><path d="M0 0 H9 L4.5 5 Z" fill="#555"/></svg>
<div style="position:absolute;left:1338px;top:758px;width:179px;height:51px;background:#8f8f8f;"></div>
<div style="position:absolute;left:1338px;top:809px;width:179px;height:50px;background:#d4d4d4;"></div>
<div style="position:absolute;left:1343.0px;top:774px;width:170px;height:22px;text-align:center;font:normal 16px/22px 'Liberation Sans',sans-serif;color:#fff;white-space:nowrap;-webkit-text-stroke:.5px #fff">Broker</div>
<div style="position:absolute;left:1266.0px;top:824px;width:300px;height:22px;text-align:center;font:normal 16px/22px 'Liberation Sans',sans-serif;color:#4e4e4e;white-space:nowrap;-webkit-text-stroke:.2px #4e4e4e;">All Brokers</div>
<svg style="position:absolute;left:1500.77px;top:832.8000000000001px" width="8.459999999999999" height="4.8" viewBox="0 0 9 5"><path d="M0 0 H9 L4.5 5 Z" fill="#555"/></svg>
<div style="position:absolute;left:1544px;top:758px;width:179px;height:51px;background:#8f8f8f;"></div>
<div style="position:absolute;left:1544px;top:809px;width:179px;height:50px;background:#d4d4d4;"></div>
<div style="position:absolute;left:1611px;top:774px;font:16px/22px 'Liberation Sans',sans-serif;color:#fff;white-space:nowrap;-webkit-text-stroke:.5px #fff">Ticker</div>
<div style="position:absolute;left:1552px;top:824px;font:16px/22px 'Liberation Sans',sans-serif;color:#4e4e4e;-webkit-text-stroke:.2px #4e4e4e;white-space:nowrap">All Tickers (Default)</div>
<div style="position:absolute;left:1544px;top:881px;width:179px;height:51px;background:#5c5c5c;"></div>
<div style="position:absolute;left:1544px;top:932px;width:179px;height:46px;background:#c6c6c6;"></div>
<div style="position:absolute;left:1564px;top:896px;font:16px/22px 'Liberation Sans',sans-serif;color:#fff;white-space:nowrap;-webkit-text-stroke:.5px #fff">Profit / Loss</div>
<div style="position:absolute;left:1557px;top:945px;font:16px/22px 'Liberation Sans',sans-serif;color:#555;-webkit-text-stroke:.2px #555;white-space:nowrap">Show All (Default)</div>
<div style="position:absolute;left:55px;top:1017px;width:1606px;height:1px;background:#e2e2e2;"></div>
<div style="position:absolute;left:1647px;top:305px;width:14px;height:727px;background:#fff;border-left:1px solid #e6e6e6;box-sizing:border-box"></div>
<div style="position:absolute;left:1647px;top:278px;width:14px;height:29px;background:#f8f9fa;border-bottom:1px solid #c4c7c5;border-left:1px solid #d0d0d0;box-sizing:border-box"></div>
<div style="position:absolute;left:1648.5px;top:309px;width:9.5px;height:399px;background:#d5d3d9;border-radius:4px"></div>
<div style="position:absolute;left:1647px;top:980px;width:14px;height:1px;background:#e2e2e2;"></div>
<div style="position:absolute;left:1647px;top:998px;width:14px;height:1px;background:#e2e2e2;"></div>
<svg style="position:absolute;left:1650px;top:986px" width="8" height="5" viewBox="0 0 8 5"><path d="M0 5 H8 L4 0 Z" fill="#888"/></svg>
<svg style="position:absolute;left:1650px;top:1006px" width="8" height="5" viewBox="0 0 8 5"><path d="M0 0 H8 L4 5 Z" fill="#888"/></svg>
<div style="position:absolute;left:1647px;top:1017px;width:14px;height:1px;background:#e2e2e2;"></div>
<div style="position:absolute;left:55px;top:1018px;width:1592px;height:14px;background:#fff;"></div>
<div style="position:absolute;left:57px;top:1020px;width:249px;height:10px;background:#dcdcdc;border-radius:5px"></div>
<div style="position:absolute;left:1607px;top:1018px;width:1px;height:14px;background:#e2e2e2;"></div>
<div style="position:absolute;left:1627px;top:1018px;width:1px;height:14px;background:#e2e2e2;"></div>
<svg style="position:absolute;left:1614px;top:1021px" width="5" height="8" viewBox="0 0 5 8"><path d="M5 0 V8 L0 4 Z" fill="#888"/></svg>
<svg style="position:absolute;left:1635px;top:1021px" width="5" height="8" viewBox="0 0 5 8"><path d="M0 0 V8 L5 4 Z" fill="#888"/></svg>
</div></div>
<svg style="position:absolute;left:300px;top:400px" width="240" height="230" viewBox="300 400 240 230">
<path d="M512 425 L338 586.5" stroke="#fb2a13" stroke-width="9" fill="none"/>
<path d="M320 602 L333 567 L344 584 L357 593 Z" fill="#fb2a13"/>
</svg>
<svg style="position:absolute;left:415px;top:378px" width="16" height="22" viewBox="0 0 16 22"><path d="M1.5 1.5 V17 L5.5 13.5 L8.5 20 L11 19 L8 12.5 H13 Z" fill="#1a1a1a" stroke="#fff" stroke-width="1.3" stroke-linejoin="round"/></svg>
<div id="tabbar"></div>
<svg style="position:absolute;left:59px;top:1047px" width="13" height="13" viewBox="0 0 13 13"><path d="M6.5 0 V13 M0 6.5 H13" stroke="#444746" stroke-width="2"/></svg>
<svg style="position:absolute;left:96px;top:1048px" width="15" height="13" viewBox="0 0 15 13"><path d="M0 1 H15 M0 4.7 H15 M0 8.4 H15 M0 12 H15" stroke="#444746" stroke-width="1.9"/></svg>
<div style="position:absolute;left:401px;top:1033px;width:161px;height:47px;background:#fff;box-shadow:0 0 3px rgba(0,0,0,.18)"></div>
<div style="position:absolute;left:401px;top:1075px;width:161px;height:5px;background:#237a2d"></div>
<div class="st" style="left:151px;color:#45484d;-webkit-text-stroke:.55px #45484d;letter-spacing:1.05px">Settings</div>
<svg style="position:absolute;left:231.5px;top:1054.5px" width="9" height="5" viewBox="0 0 9 5"><path d="M0 0 H9 L4.5 5 Z" fill="#70757a"/></svg>
<div class="st" style="left:280px;color:#45484d;-webkit-text-stroke:.55px #45484d;letter-spacing:0.75px">Exchange</div>
<svg style="position:absolute;left:371.5px;top:1054.5px" width="9" height="5" viewBox="0 0 9 5"><path d="M0 0 H9 L4.5 5 Z" fill="#70757a"/></svg>
<div class="st" style="left:421.5px;color:#1e8038;-webkit-text-stroke:.55px #1e8038;letter-spacing:0.9px">Profit / Loss</div>
<svg style="position:absolute;left:533.0px;top:1054.5px" width="9" height="5" viewBox="0 0 9 5"><path d="M0 0 H9 L4.5 5 Z" fill="#1e8038"/></svg>
<div class="st" style="left:582px;color:#45484d;-webkit-text-stroke:.55px #45484d;letter-spacing:0.88px">Summary</div>
<svg style="position:absolute;left:671.0px;top:1054.5px" width="9" height="5" viewBox="0 0 9 5"><path d="M0 0 H9 L4.5 5 Z" fill="#70757a"/></svg>
<div class="st" style="left:720.5px;color:#45484d;-webkit-text-stroke:.55px #45484d;letter-spacing:0.95px">2022</div>
<svg style="position:absolute;left:772.0px;top:1054.5px" width="9" height="5" viewBox="0 0 9 5"><path d="M0 0 H9 L4.5 5 Z" fill="#70757a"/></svg>
<div class="st" style="left:821.5px;color:#45484d;-webkit-text-stroke:.55px #45484d;letter-spacing:0.9px">Transactions</div>
<svg style="position:absolute;left:939.5px;top:1054.5px" width="9" height="5" viewBox="0 0 9 5"><path d="M0 0 H9 L4.5 5 Z" fill="#70757a"/></svg>
<div class="st" style="left:989px;color:#45484d;-webkit-text-stroke:.55px #45484d;letter-spacing:0.9px">Deferred</div>
<svg style="position:absolute;left:1073.0px;top:1054.5px" width="9" height="5" viewBox="0 0 9 5"><path d="M0 0 H9 L4.5 5 Z" fill="#70757a"/></svg>
<div class="st" style="left:1122.5px;color:#45484d;-webkit-text-stroke:.55px #45484d;letter-spacing:0.75px">Errors</div>
<svg style="position:absolute;left:1184.5px;top:1054.5px" width="9" height="5" viewBox="0 0 9 5"><path d="M0 0 H9 L4.5 5 Z" fill="#70757a"/></svg>
<div class="st" style="left:1233px;width:27px;overflow:hidden;color:#45484d;-webkit-text-stroke:.55px #45484d;letter-spacing:.9px">Sum</div>
<div style="position:absolute;left:262px;top:1033px;width:1px;height:47px;background:#e9ebed"></div>
<div style="position:absolute;left:697px;top:1033px;width:1px;height:47px;background:#e9ebed"></div>
<div style="position:absolute;left:800px;top:1033px;width:1px;height:47px;background:#e9ebed"></div>
<div style="position:absolute;left:969px;top:1033px;width:1px;height:47px;background:#e9ebed"></div>
<div style="position:absolute;left:1102px;top:1033px;width:1px;height:47px;background:#e9ebed"></div>
<div style="position:absolute;left:1214px;top:1033px;width:1px;height:47px;background:#e9ebed"></div>
<div style="position:absolute;left:120px;top:1033px;width:11px;height:47px;background:linear-gradient(90deg,rgba(0,0,0,0),rgba(0,0,0,.1))"></div>
<div style="position:absolute;left:130px;top:1033px;width:1.5px;height:47px;background:#d2d3d5"></div>
<div style="position:absolute;left:1256px;top:1033px;width:6px;height:47px;background:linear-gradient(90deg,rgba(0,0,0,0),rgba(0,0,0,.13))"></div>
<div style="position:absolute;left:1262px;top:1033px;width:399px;height:47px;background:#eff0f1"></div>
<svg style="position:absolute;left:1279px;top:1048px" width="6.5" height="11" viewBox="0 0 8 13"><path d="M8 0 V13 L0 6.5 Z" fill="#3c4043"/></svg>
<svg style="position:absolute;left:1315.5px;top:1048px" width="6.5" height="11" viewBox="0 0 8 13"><path d="M0 0 V13 L8 6.5 Z" fill="#3c4043"/></svg>
<svg style="position:absolute;left:1615.5px;top:1045.5px" width="21.3" height="24.3" viewBox="0 0 23 26"><path d="M2.5 0 H20.5 a2.5 2.5 0 0 1 2.5 2.5 V18.5 a2.5 2.5 0 0 1 -2.5 2.5 H15 L11.5 25.5 L8 21 H2.5 a2.5 2.5 0 0 1 -2.5 -2.5 V2.5 a2.5 2.5 0 0 1 2.5 -2.5 Z" fill="#5c5f64"/><path d="M11.5 3.5 L14 8 L18.5 10.5 L14 13 L11.5 17.5 L9 13 L4.5 10.5 L9 8 Z" fill="#fff"/></svg>
<div id="side"></div>
<svg style="position:absolute;left:1684px;top:225px" width="22" height="22" viewBox="0 0 22 22">
<rect x="0" y="0" width="22" height="22" rx="2.5" fill="#4285f4"/>
<path d="M17 0 H19.5 a2.5 2.5 0 0 1 2.5 2.5 V5 H17 Z" fill="#1967d2"/>
<rect x="17" y="5" width="5" height="12" fill="#fbbc04"/><rect x="5" y="17" width="12" height="5" fill="#34a853"/>
<path d="M0 17 H5 V22 H2.5 a2.5 2.5 0 0 1 -2.5 -2.5 Z" fill="#188038"/><path d="M17 17 H22 L17 22 Z" fill="#ea4335"/>
<rect x="5" y="5" width="12" height="12" fill="#fff"/>
<text x="11" y="14.7" font-family="Liberation Sans, sans-serif" font-size="9.5" font-weight="bold" fill="#4285f4" text-anchor="middle" letter-spacing="-.6">31</text></svg>
<svg style="position:absolute;left:1684px;top:292px" width="22" height="23" viewBox="0 0 22 22" preserveAspectRatio="none"><rect width="22" height="22" rx="2.5" fill="#f9b62a"/><path d="M11 4.5 a4.3 4.3 0 0 0 -2.3 7.9 V14.5 H13.3 V12.4 A4.3 4.3 0 0 0 11 4.5 Z M9 15.8 H13 V17.3 H9 Z" fill="#fff"/></svg>
<svg style="position:absolute;left:1684px;top:359px" width="23" height="23" viewBox="0 0 23 23"><path d="M19.3 9.3 A8.2 8.2 0 1 1 14.5 4" fill="none" stroke="#1a6ce0" stroke-width="2.7"/><path d="M7 11.5 L10.5 15 L20.5 4" fill="none" stroke="#1a6ce0" stroke-width="2.9" stroke-linecap="round" stroke-linejoin="round"/><circle cx="19.5" cy="3.8" r="2.1" fill="#1a6ce0"/></svg>
<svg style="position:absolute;left:1687px;top:428px" width="17" height="19" viewBox="0 0 21 21"><circle cx="10.5" cy="5" r="4.3" fill="#1b63d1"/><path d="M1.5 20.5 V16 c0 -4 4.5 -5.5 9 -5.5 s9 1.5 9 5.5 V20.5 Z" fill="#1b63d1"/><path d="M19.5 20.5 V16.5 c0 -1 -.3 -1.9 -.9 -2.7 L13 20.5 Z" fill="#4a8df0"/></svg>
<svg style="position:absolute;left:1688px;top:496px" width="14.5" height="20.5" viewBox="0 0 17 24">
<path d="M8.5 0 A8.5 8.5 0 0 0 0 8.5 c0 5 4.5 8 6.8 13.5 c.5 1.3 .8 2 1.7 2 s1.2 -.7 1.7 -2 C12.5 16.5 17 13.5 17 8.5 A8.5 8.5 0 0 0 8.5 0 Z" fill="#34a853"/>
<path d="M8.5 0 A8.5 8.5 0 0 0 2 3 L6.2 7 Z" fill="#ea4335"/><path d="M2 3 A8.5 8.5 0 0 0 0 8.5 c0 1.8 .6 3.4 1.5 4.8 L6.2 7 Z" fill="#1a73e8"/>
<path d="M8.5 0 c2.7 0 5.1 1.3 6.6 3.2 L10.8 8.3 L6.2 7 Z" fill="#4285f4"/>
<path d="M1.5 13.3 L10.8 3 L15.1 3.2 L4 16.8 Z" fill="#fbbc04"/>
<circle cx="8.5" cy="8.5" r="3" fill="#fff"/></svg>
<div style="position:absolute;left:1684px;top:558px;width:23px;height:1px;background:#e0e0e0"></div>
<svg style="position:absolute;left:1687.5px;top:603.5px" width="16" height="16" viewBox="0 0 16 16"><path d="M8 0 V16 M0 8 H16" stroke="#1f1f1f" stroke-width="2"/></svg>
<svg style="position:absolute;left:1690px;top:1040.5px" width="8.3" height="12.5" viewBox="0 0 10 15"><path d="M1.5 1.5 L8 7.5 L1.5 13.5" fill="none" stroke="#3c4043" stroke-width="2.4"/></svg>
<div style="position:absolute;left:0;top:1067px;width:13px;height:13px;background:radial-gradient(circle at 100% 0,transparent 12.5px,#1b1638 13px)"></div>
<div style="position:absolute;left:1715px;top:1067px;width:13px;height:13px;background:radial-gradient(circle at 0 0,transparent 12.5px,#3a2bb5 13px)"></div>
</div></body></html>
